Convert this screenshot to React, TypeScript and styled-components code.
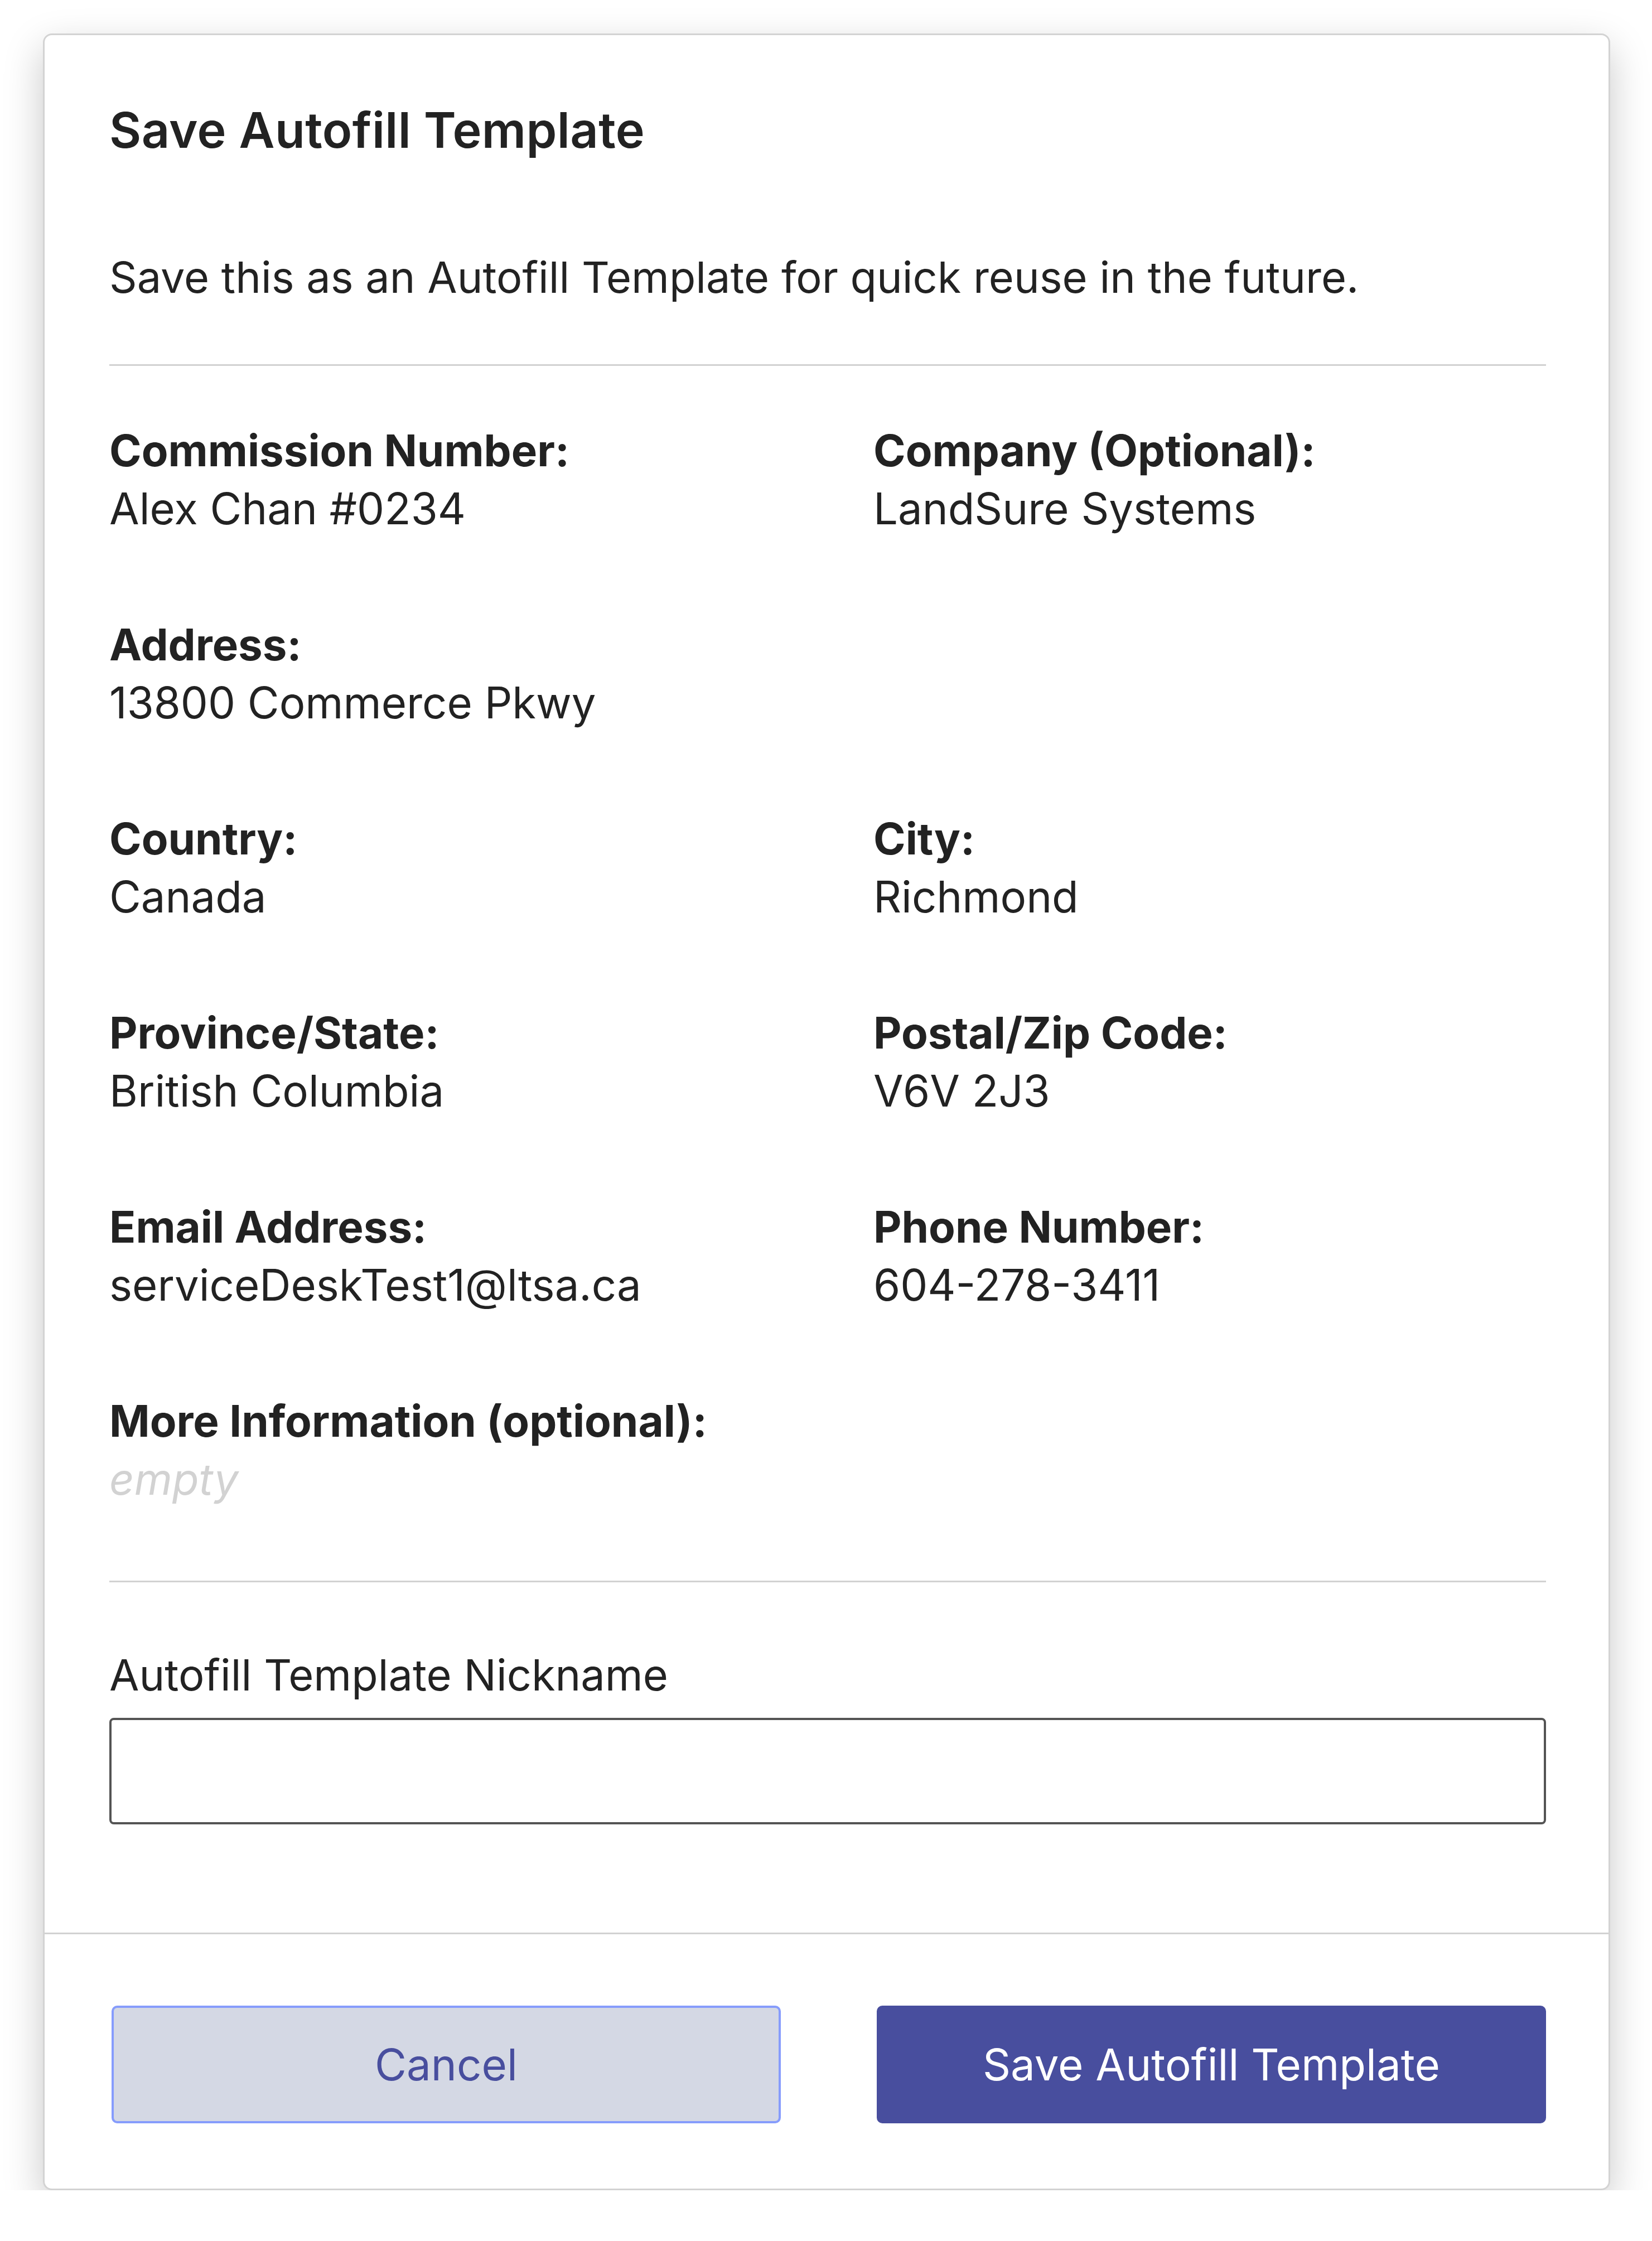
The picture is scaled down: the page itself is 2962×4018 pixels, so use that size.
import React from "react";
import styled, { createGlobalStyle } from "styled-components";

const GlobalStyle = createGlobalStyle`
  html, body {
    margin: 0;
    padding: 0;
    background: #ffffff;
  }
  body {
    font-family: Inter, "Noto Sans", "Liberation Sans", sans-serif;
    color: #222222;
  }
  * { box-sizing: border-box; }
`;

const Page = styled.div`
  width: 2962px;
  padding: 60px 0 0 77px;
`;

const Card = styled.section`
  width: 2810px;
  background: #ffffff;
  border: 3px solid #d3d3d3;
  border-radius: 16px;
  box-shadow: 0 26px 70px rgba(0, 0, 0, 0.22);
  display: flex;
  flex-direction: column;
`;

const Body = styled.div`
  padding: 118px 112px 194px 116px;
  display: flex;
  flex-direction: column;
`;

const Title = styled.h2`
  margin: 0;
  font-size: 88px;
  line-height: 104px;
  font-weight: 600;
  letter-spacing: 0.4px;
  color: #222222;
`;

const Subtitle = styled.p`
  margin: 160px 0 0;
  font-size: 77.4px;
  line-height: 104px;
  font-weight: 400;
  color: #222222;
`;

const Divider = styled.hr<{ $top: number }>`
  margin: ${(p) => p.$top}px 0 0;
  border: none;
  height: 3px;
  background: #d2d2d2;
`;

const FieldGrid = styled.div`
  margin-top: 100px;
  display: grid;
  grid-template-columns: 1fr 1fr;
  column-gap: 164px;
  row-gap: 140px;
`;

const Field = styled.div<{ $full?: boolean }>`
  grid-column: ${(p) => (p.$full ? "1 / -1" : "auto")};
  display: flex;
  flex-direction: column;
`;

const FieldLabel = styled.div`
  font-size: 78px;
  line-height: 104px;
  font-weight: 650;
  color: #222222;
`;

const FieldValue = styled.div<{ $empty?: boolean }>`
  font-size: 77.8px;
  line-height: 104px;
  font-weight: 400;
  font-style: ${(p) => (p.$empty ? "italic" : "normal")};
  color: ${(p) => (p.$empty ? "#d2d2d2" : "#222222")};
`;

const InputLabel = styled.label`
  margin-top: 114px;
  font-size: 77.5px;
  line-height: 104px;
  font-weight: 400;
  color: #222222;
`;

const TextInput = styled.input`
  margin-top: 25px;
  height: 191px;
  width: 100%;
  border: 4px solid #545454;
  border-radius: 8px;
  background: #ffffff;
  font-family: inherit;
  font-size: 76px;
  padding: 0 32px;
  outline: none;
`;

const Footer = styled.div`
  border-top: 3px solid #d2d2d2;
  padding: 128px 112px 117px 120px;
  display: grid;
  grid-template-columns: 1fr 1fr;
  column-gap: 172px;
`;

const Button = styled.button<{ $primary?: boolean }>`
  height: 211px;
  border-radius: 10px;
  font-family: inherit;
  font-size: 78px;
  font-weight: 400;
  cursor: pointer;
  border: 4px solid ${(p) => (p.$primary ? "#484e9e" : "#869cfc")};
  background: ${(p) => (p.$primary ? "#484e9e" : "#d4d8e4")};
  color: ${(p) => (p.$primary ? "#ffffff" : "#484e9e")};
`;

type Item = { label: string; value: string; full?: boolean; empty?: boolean };

const items: Item[] = [
  { label: "Commission Number:", value: "Alex Chan #0234" },
  { label: "Company (Optional):", value: "LandSure Systems" },
  { label: "Address:", value: "13800 Commerce Pkwy", full: true },
  { label: "Country:", value: "Canada" },
  { label: "City:", value: "Richmond" },
  { label: "Province/State:", value: "British Columbia" },
  { label: "Postal/Zip Code:", value: "V6V 2J3" },
  { label: "Email Address:", value: "serviceDeskTest1@ltsa.ca" },
  { label: "Phone Number:", value: "604-278-3411" },
  { label: "More Information (optional):", value: "empty", full: true, empty: true },
];

export default function App() {
  return (
    <>
      <GlobalStyle />
      <Page>
        <Card>
          <Body>
            <Title>Save Autofill Template</Title>
            <Subtitle>Save this as an Autofill Template for quick reuse in the future.</Subtitle>
            <Divider $top={104} />
            <FieldGrid>
              {items.map((it) => (
                <Field key={it.label} $full={it.full}>
                  <FieldLabel>{it.label}</FieldLabel>
                  <FieldValue $empty={it.empty}>{it.value}</FieldValue>
                </Field>
              ))}
            </FieldGrid>
            <Divider $top={130} />
            <InputLabel htmlFor="nickname">Autofill Template Nickname</InputLabel>
            <TextInput id="nickname" type="text" />
          </Body>
          <Footer>
            <Button type="button">Cancel</Button>
            <Button type="button" $primary>
              Save Autofill Template
            </Button>
          </Footer>
        </Card>
      </Page>
    </>
  );
}
